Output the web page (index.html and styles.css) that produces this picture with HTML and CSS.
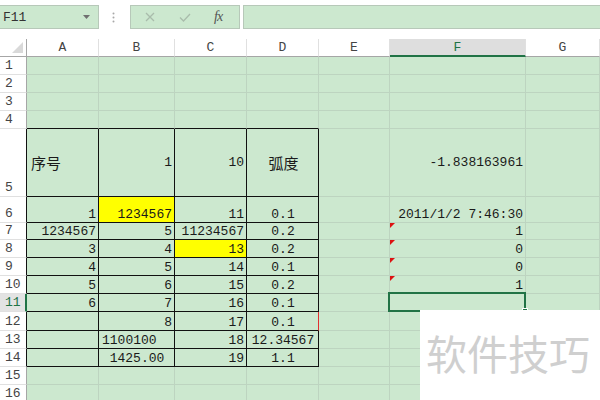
FILE: index.html
```html
<!DOCTYPE html>
<html>
<head>
<meta charset="utf-8">
<link rel="stylesheet" href="styles.css">
</head>
<body>
<div class="app">
  <div class="fbar">
    <div class="namebox"><span>F11</span><svg class="dd" width="7" height="4" viewBox="0 0 7 4"><polygon points="0,0 7,0 3.5,4" fill="#707070"/></svg></div>
    <div class="dots"><svg width="3" height="11" viewBox="0 0 3 11"><circle cx="1.5" cy="1.5" r="1" fill="#a8a8a8"/><circle cx="1.5" cy="5.5" r="1" fill="#a8a8a8"/><circle cx="1.5" cy="9.5" r="1" fill="#a8a8a8"/></svg></div>
    <div class="fbtns">
      <svg class="ic-x" width="10" height="10" viewBox="0 0 10 10"><path d="M1 1 L9 9 M9 1 L1 9" stroke="#a9bcab" stroke-width="1.3" fill="none"/></svg>
      <svg class="ic-ok" width="12" height="9" viewBox="0 0 12 9"><path d="M1 4.5 L4.5 8 L11 1" stroke="#a9bcab" stroke-width="1.3" fill="none"/></svg>
      <span class="fx">fx</span>
    </div>
    <div class="finput"></div>
  </div>

  <div class="sheet">
    <div class="corner"><svg width="11" height="11" viewBox="0 0 11 11"><polygon points="11,0 11,11 0,11" fill="#d9d9d9"/></svg></div>
    <div class="ch">A</div><div class="ch">B</div><div class="ch">C</div><div class="ch">D</div><div class="ch">E</div><div class="ch sel">F</div><div class="ch">G</div>

    <div class="rh">1</div><div class="c"></div><div class="c"></div><div class="c"></div><div class="c"></div><div class="c"></div><div class="c"></div><div class="c"></div>
    <div class="rh">2</div><div class="c"></div><div class="c"></div><div class="c"></div><div class="c"></div><div class="c"></div><div class="c"></div><div class="c"></div>
    <div class="rh">3</div><div class="c"></div><div class="c"></div><div class="c"></div><div class="c"></div><div class="c"></div><div class="c"></div><div class="c"></div>
    <div class="rh">4</div><div class="c bb"></div><div class="c bb"></div><div class="c bb"></div><div class="c bb"></div><div class="c"></div><div class="c"></div><div class="c"></div>

    <div class="rh tb">5</div><div class="c b v l zh">序号</div><div class="c b v">1</div><div class="c b v">10</div><div class="c b v m zh">弧度</div><div class="c v"></div><div class="c v">-1.838163961</div><div class="c"></div>
    <div class="rh tb">6</div><div class="c b">1</div><div class="c b y">1234567</div><div class="c b">11</div><div class="c b m">0.1</div><div class="c"></div><div class="c">2011/1/2 7:46:30</div><div class="c"></div>
    <div class="rh tb">7</div><div class="c b">1234567</div><div class="c b">5</div><div class="c b">11234567</div><div class="c b m">0.2</div><div class="c"></div><div class="c err">1</div><div class="c"></div>
    <div class="rh tb">8</div><div class="c b">3</div><div class="c b">4</div><div class="c b y">13</div><div class="c b m">0.2</div><div class="c"></div><div class="c err">0</div><div class="c"></div>
    <div class="rh tb">9</div><div class="c b">4</div><div class="c b">5</div><div class="c b">14</div><div class="c b m">0.1</div><div class="c"></div><div class="c err">0</div><div class="c"></div>
    <div class="rh tb">10</div><div class="c b">5</div><div class="c b">6</div><div class="c b">15</div><div class="c b m">0.2</div><div class="c"></div><div class="c err">1</div><div class="c"></div>
    <div class="rh tb cur">11</div><div class="c b">6</div><div class="c b">7</div><div class="c b">16</div><div class="c b m">0.1</div><div class="c"></div><div class="c cur"></div><div class="c"></div>
    <div class="rh tb">12</div><div class="c b"></div><div class="c b">8</div><div class="c b">17</div><div class="c b m red">0.1</div><div class="c"></div><div class="c"></div><div class="c"></div>
    <div class="rh tb">13</div><div class="c b"></div><div class="c b l">1100100</div><div class="c b">18</div><div class="c b m">12.34567</div><div class="c"></div><div class="c"></div><div class="c"></div>
    <div class="rh tb">14</div><div class="c b"></div><div class="c b m">1425.00</div><div class="c b">19</div><div class="c b m">1.1</div><div class="c"></div><div class="c"></div><div class="c"></div>
    <div class="rh">15</div><div class="c"></div><div class="c"></div><div class="c"></div><div class="c"></div><div class="c"></div><div class="c"></div><div class="c"></div>
    <div class="rh">16</div><div class="c"></div><div class="c"></div><div class="c"></div><div class="c"></div><div class="c"></div><div class="c"></div><div class="c"></div>
  </div>

  <div class="watermark">软件技巧</div>
</div>
</body>
</html>
```
FILE: styles.css
```css
html, body {
  margin: 0;
  padding: 0;
  background: #ffffff;
}
body {
  width: 600px;
  height: 400px;
  overflow: hidden;
  font-family: "Liberation Mono", "Noto Sans CJK SC", monospace;
  font-size: 13px;
  color: #222;
}
.app {
  position: relative;
  width: 600px;
  height: 400px;
  overflow: hidden;
}

/* formula bar */
.fbar {
  height: 39px;
  box-sizing: border-box;
  padding-top: 5px;
  display: flex;
  align-items: flex-start;
  background: #fff;
}
.namebox {
  width: 99px;
  height: 24px;
  box-sizing: border-box;
  border: 1px solid #b7c8b9;
  border-left: none;
  background: #cce8cf;
  display: flex;
  align-items: center;
  justify-content: space-between;
  padding: 0 8px 0 3px;
  font-size: 13px;
  color: #333;
}
.dd { margin-top: -1px; }
.dots {
  width: 31px;
  height: 24px;
  display: flex;
  align-items: center;
  justify-content: center;
  padding-right: 3px;
  box-sizing: border-box;
}
.fbtns {
  width: 110px;
  height: 24px;
  box-sizing: border-box;
  border: 1px solid #b7c8b9;
  background: #cce8cf;
  display: flex;
  align-items: center;
  padding-left: 14px;
}
.ic-ok { margin-left: 24px; }
.fx {
  margin-left: 23px;
  font-family: "Liberation Serif", serif;
  font-style: italic;
  font-size: 14px;
  color: #555;
  letter-spacing: -1px;
}
.finput {
  flex: 1;
  margin-left: 3px;
  height: 24px;
  box-sizing: border-box;
  border: 1px solid #b7c8b9;
  border-right: none;
  background: #cce8cf;
}

/* sheet grid */
.sheet {
  display: grid;
  grid-template-columns: 27px 72px 76px 72px 72px 71px 136px 74px;
  grid-template-rows: 18px 18px 18px 18px 18px 68px 26px 17px 18px 18px 18px 18px 19px 18px 18px 18px 18px;
}
.corner {
  background: #fff;
  border-right: 1px solid #a6a6a6;
  border-bottom: 1px solid #a6a6a6;
  box-sizing: border-box;
  display: flex;
  align-items: flex-end;
  justify-content: flex-end;
  padding: 0 3px 3px 0;
}
.ch {
  background: #fff;
  box-sizing: border-box;
  border-right: 1px solid #e0e0e0;
  border-bottom: 1px solid #a6a6a6;
  display: flex;
  align-items: flex-end;
  justify-content: center;
  line-height: 12px;
  padding-bottom: 2px;
  color: #444;
}
.ch.sel {
  background: #dedede;
  border-bottom: 2px solid #217346;
  color: #217346;
  padding-bottom: 1px;
}
.rh {
  background: #fff;
  box-sizing: border-box;
  border-right: 1px solid #a6a6a6;
  border-bottom: 1px solid #e0e0e0;
  display: flex;
  align-items: flex-end;
  padding: 0 0 2px 5px;
  line-height: 12px;
  color: #444;
}
.rh.tb { border-right-color: #111; }
.rh.cur {
  background: #e3e3e3;
  border-right: 2px solid #217346;
  color: #217346;
}

.c {
  position: relative;
  background: #cce8cf;
  box-sizing: border-box;
  border-right: 1px solid #bdd4c0;
  border-bottom: 1px solid #bdd4c0;
  display: flex;
  align-items: flex-end;
  justify-content: flex-end;
  padding: 0 2px 1px 3px;
  line-height: 12px;
  white-space: pre;
  color: #1a1a1a;
}
.c.b {
  border-right-color: #111;
  border-bottom-color: #111;
}
.c.bb { border-bottom-color: #111; }
.c.red { border-right-color: #e03030; }
.c.l { justify-content: flex-start; }
.c.m { justify-content: center; }
.c.v { align-items: center; padding-top: 2px; }
.c.zh {
  font-family: "Noto Sans CJK SC", sans-serif;
  font-size: 15px;
  line-height: 18px;
  padding-left: 4px;
}
.c.y { background: #ffff00; }
.c.err::before {
  content: "";
  position: absolute;
  left: 0;
  top: 0;
  border-top: 5px solid #dd1111;
  border-right: 5px solid transparent;
}
.c.cur::after {
  content: "";
  position: absolute;
  left: -2px;
  top: -2px;
  right: -1px;
  bottom: -1px;
  border: 2px solid #217346;
  box-sizing: border-box;
  z-index: 2;
}
.c.cur::before {
  content: "";
  position: absolute;
  right: -3px;
  bottom: -3px;
  width: 4px;
  height: 4px;
  background: #217346;
  border: 1px solid #fff;
  z-index: 3;
}

/* watermark overlay */
.watermark {
  position: absolute;
  left: 420px;
  top: 310px;
  width: 180px;
  height: 90px;
  background: #fff;
  z-index: 5;
  box-sizing: border-box;
  padding: 18px 0 0 6px;
  font-family: "Noto Sans CJK SC", sans-serif;
  font-size: 41px;
  line-height: 48px;
  color: #cfcfcf;
  letter-spacing: 0px;
}
```
